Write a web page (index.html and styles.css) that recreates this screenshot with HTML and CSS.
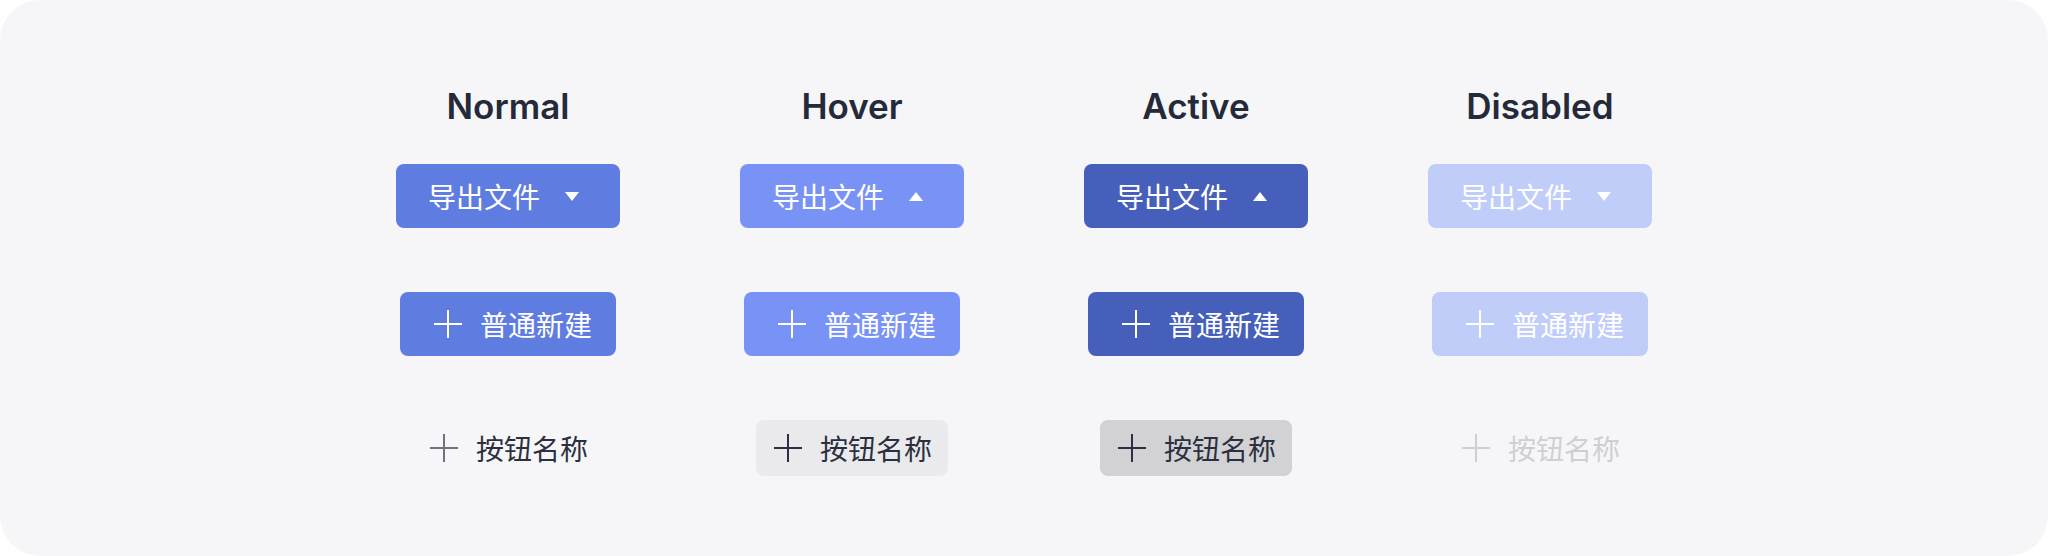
FILE: index.html
```html
<!DOCTYPE html>
<html lang="zh-CN">
<head>
<meta charset="utf-8">
<title>Button states</title>
<link rel="stylesheet" href="styles.css">
</head>
<body>
<div class="card">
  <div class="grid">
    <div class="col">
      <h2 class="title">Normal</h2>
      <button class="btn-drop primary normal"><span class="label">导出文件</span><span class="caret"><svg width="14" height="9" viewBox="0 0 14 9"><path d="M0 0H14L7 9Z" fill="#fff"/></svg></span></button>
      <button class="btn-new primary normal"><svg class="plus" width="28" height="28" viewBox="0 0 28 28"><path d="M14 0V28M0 14H28" stroke="currentColor" stroke-width="2"/></svg><span class="label">普通新建</span></button>
      <button class="btn-text t-normal"><svg class="plus" width="28" height="28" viewBox="0 0 28 28"><path d="M14 0V28M0 14H28" stroke="currentColor" stroke-width="2"/></svg><span class="label">按钮名称</span></button>
    </div>
    <div class="col">
      <h2 class="title">Hover</h2>
      <button class="btn-drop primary hover"><span class="label">导出文件</span><span class="caret"><svg width="14" height="9" viewBox="0 0 14 9"><path d="M0 9H14L7 0Z" fill="#fff"/></svg></span></button>
      <button class="btn-new primary hover"><svg class="plus" width="28" height="28" viewBox="0 0 28 28"><path d="M14 0V28M0 14H28" stroke="currentColor" stroke-width="2"/></svg><span class="label">普通新建</span></button>
      <button class="btn-text t-hover"><svg class="plus" width="28" height="28" viewBox="0 0 28 28"><path d="M14 0V28M0 14H28" stroke="currentColor" stroke-width="2"/></svg><span class="label">按钮名称</span></button>
    </div>
    <div class="col">
      <h2 class="title">Active</h2>
      <button class="btn-drop primary active"><span class="label">导出文件</span><span class="caret"><svg width="14" height="9" viewBox="0 0 14 9"><path d="M0 9H14L7 0Z" fill="#fff"/></svg></span></button>
      <button class="btn-new primary active"><svg class="plus" width="28" height="28" viewBox="0 0 28 28"><path d="M14 0V28M0 14H28" stroke="currentColor" stroke-width="2"/></svg><span class="label">普通新建</span></button>
      <button class="btn-text t-active"><svg class="plus" width="28" height="28" viewBox="0 0 28 28"><path d="M14 0V28M0 14H28" stroke="currentColor" stroke-width="2"/></svg><span class="label">按钮名称</span></button>
    </div>
    <div class="col">
      <h2 class="title">Disabled</h2>
      <button class="btn-drop primary disabled"><span class="label">导出文件</span><span class="caret"><svg width="14" height="9" viewBox="0 0 14 9"><path d="M0 0H14L7 9Z" fill="#fff"/></svg></span></button>
      <button class="btn-new primary disabled"><svg class="plus" width="28" height="28" viewBox="0 0 28 28"><path d="M14 0V28M0 14H28" stroke="currentColor" stroke-width="2"/></svg><span class="label">普通新建</span></button>
      <button class="btn-text t-disabled"><svg class="plus" width="28" height="28" viewBox="0 0 28 28"><path d="M14 0V28M0 14H28" stroke="currentColor" stroke-width="2"/></svg><span class="label">按钮名称</span></button>
    </div>
  </div>
</div>
</body>
</html>
```
FILE: styles.css
```css
html, body {
  margin: 0;
  padding: 0;
  background: #ffffff;
}
.card {
  width: 2048px;
  height: 556px;
  box-sizing: border-box;
  background: #f6f6f8;
  border-radius: 40px;
  padding-top: 84px;
}
.grid {
  display: flex;
  justify-content: center;
}
.col {
  width: 344px;
  display: flex;
  flex-direction: column;
  align-items: center;
}
.title {
  margin: 0 0 36px;
  font-family: Inter, "Liberation Sans", sans-serif;
  font-weight: 600;
  font-size: 35px;
  line-height: 44px;
  color: #252a3a;
}
button {
  border: 0;
  margin: 0;
  font-family: "Noto Sans CJK SC", "Noto Sans", sans-serif;
  font-size: 28px;
  line-height: 40px;
  display: flex;
  align-items: center;
  box-sizing: border-box;
  cursor: pointer;
}
.label {
  display: block;
  width: 112px;
  white-space: nowrap;
}
.plus {
  display: block;
  flex: none;
}
.primary {
  color: #ffffff;
  border-radius: 8px;
}
.primary.normal { background: #5f7ce0; }
.primary.hover { background: #7893f5; }
.primary.active { background: #465fba; }
.primary.disabled { background: #bfcdf8; cursor: not-allowed; }

.btn-drop {
  width: 224px;
  height: 64px;
  padding: 0 36px 0 32px;
  gap: 20px;
}
.caret {
  width: 24px;
  height: 24px;
  display: flex;
  align-items: center;
  justify-content: center;
}
.caret svg { display: block; }

.btn-new {
  width: 216px;
  height: 64px;
  margin-top: 64px;
  padding: 0 26px 0 34px;
  gap: 18px;
}

.btn-text {
  width: 192px;
  height: 56px;
  margin-top: 64px;
  padding: 0 16px 0 18px;
  gap: 18px;
  border-radius: 8px;
  color: #2b3040;
  background: transparent;
}
.btn-text.t-normal .plus { color: #6e7180; }
.btn-text.t-hover { background: #eaeaec; }
.btn-text.t-active { background: #d2d2d4; }
.btn-text.t-disabled { color: #cfcfd3; cursor: not-allowed; }
```
